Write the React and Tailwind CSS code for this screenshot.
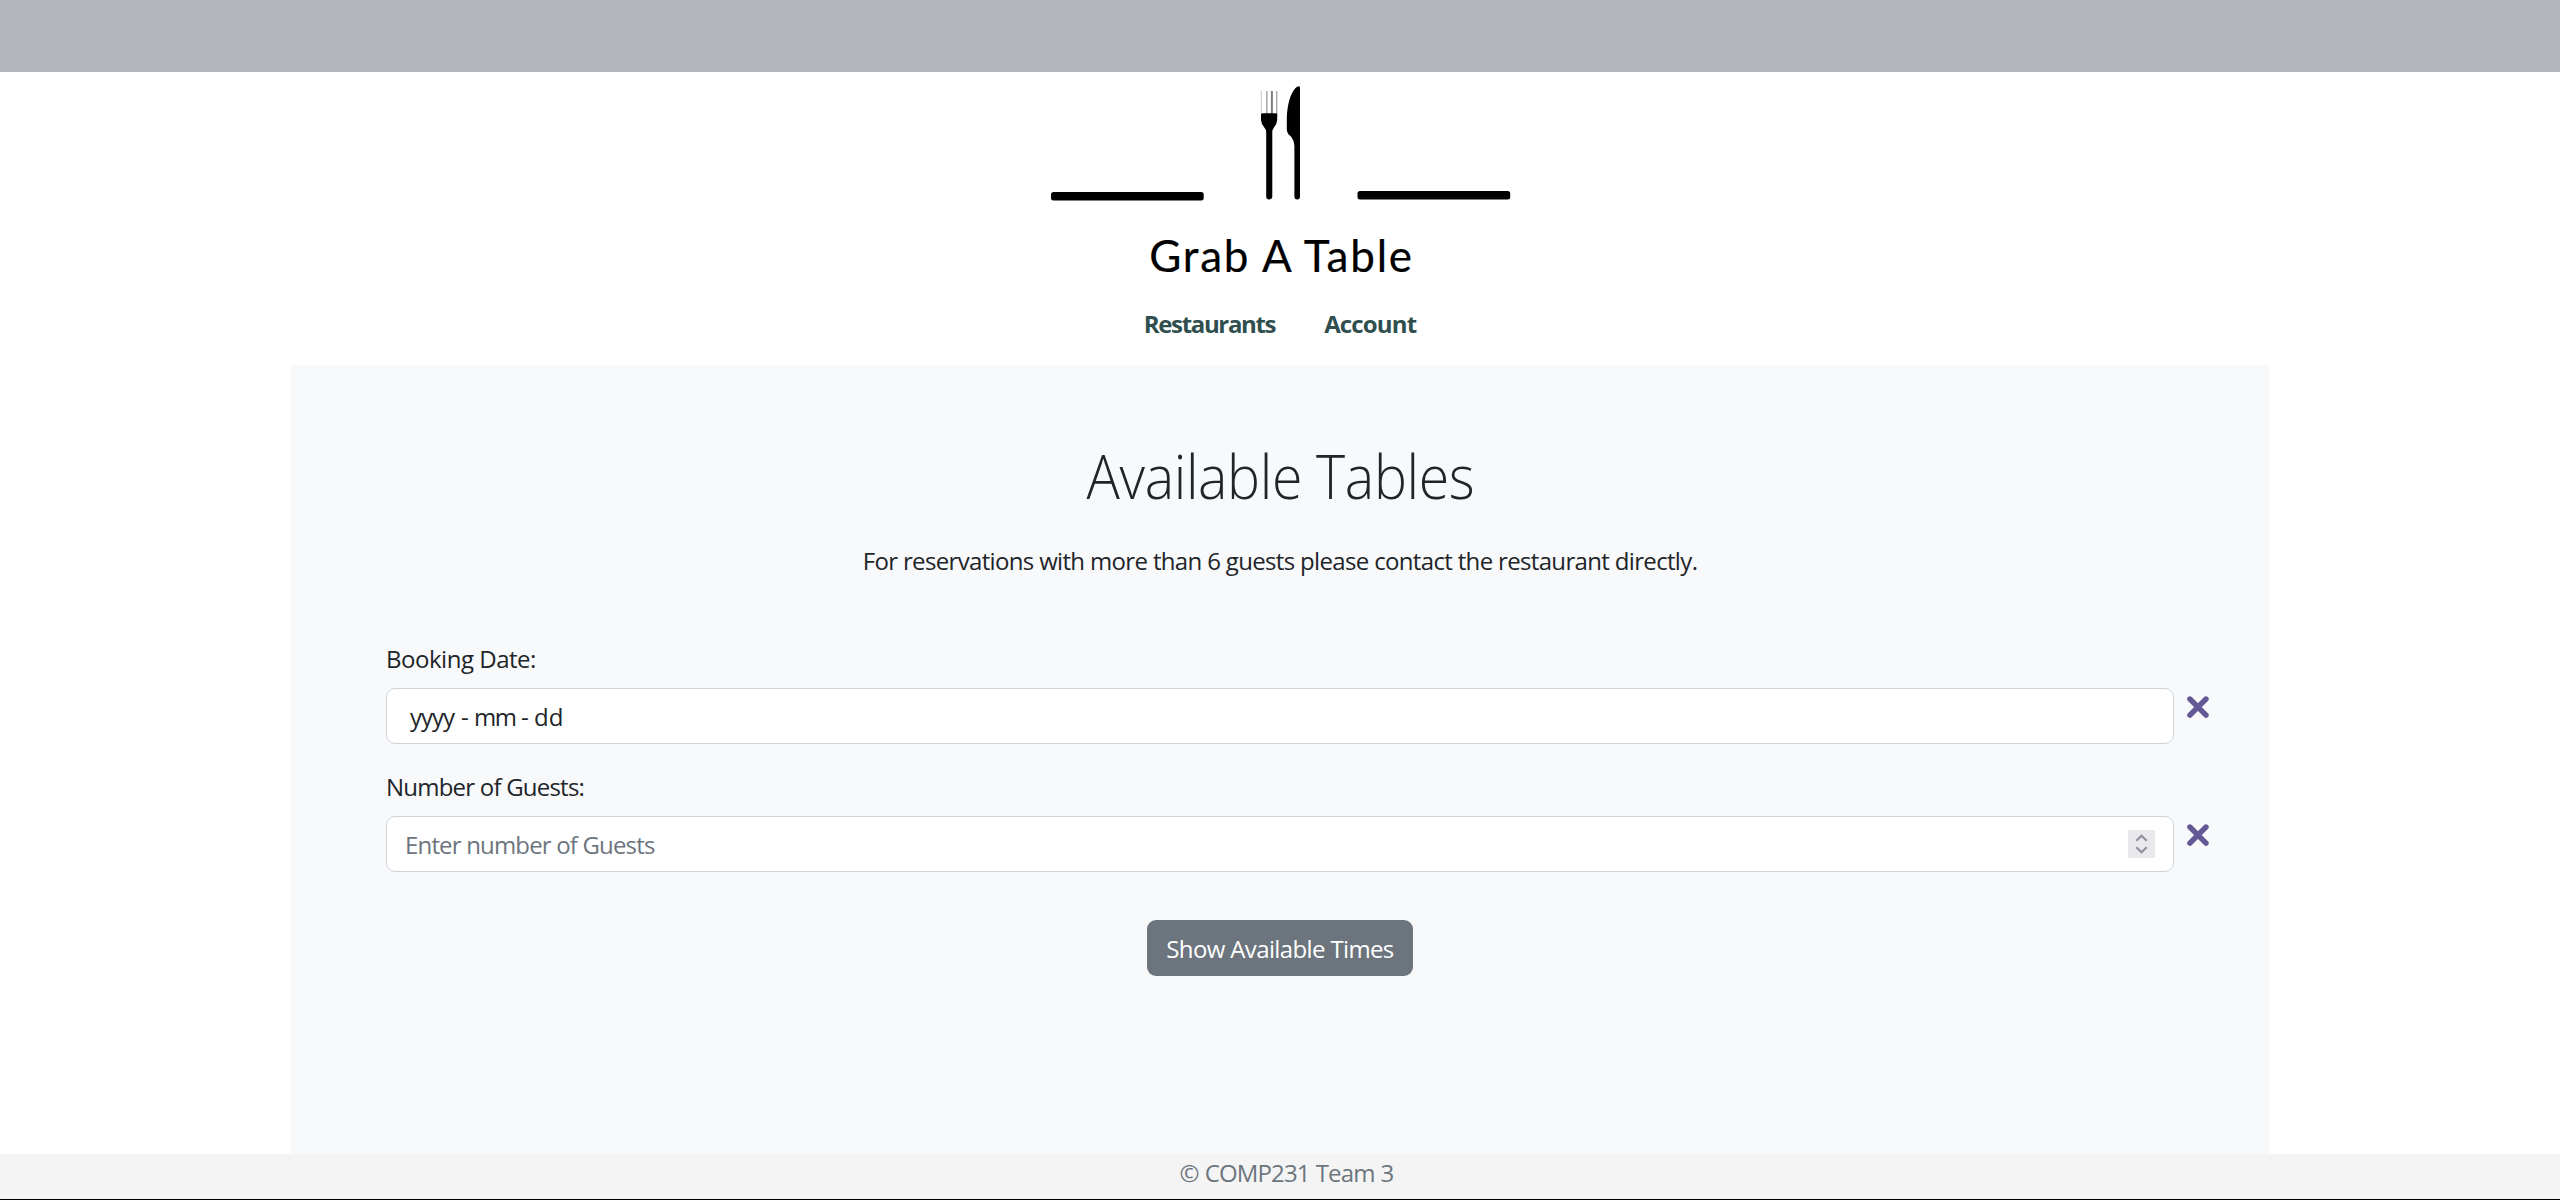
function Logo() {
  return (
    <div className="flex flex-col items-center">
      <svg className="h-[156px] w-[480px]" viewBox="1040 72 480 156" fill="black" aria-hidden="true">
        <rect x="1051" y="192" width="152.7" height="8.6" rx="2.5" />
        <rect x="1357.5" y="191" width="152.7" height="8.6" rx="2.5" />
        <g>
          <rect x="1260.8" y="91" width="0.9" height="24" opacity="0.25" />
          <rect x="1266.2" y="91" width="1.3" height="24" opacity="0.4" />
          <rect x="1270.9" y="91" width="2" height="24" opacity="0.5" />
          <rect x="1276" y="91" width="1.4" height="24" opacity="0.35" />
        </g>
        <path d="M1261 114.5Q1261 113.3 1263 113.3H1275.5Q1277.2 113.3 1277.2 114.5V120Q1277 124 1274 127.5Q1272.3 129.5 1272.3 132V196.5Q1272.3 199.4 1269.3 199.4Q1266.2 199.4 1266.2 196.5V132Q1266.2 129.5 1264.3 127.5Q1261.2 124 1261 120Z" />
        <path d="M1300 88V196.5Q1300 199.4 1297.2 199.4Q1294.4 199.4 1294.4 196.5V146Q1294 140 1290.5 136Q1286.8 133.5 1286.8 129V118C1287.3 105 1290 94 1295.5 88Q1297.5 86 1299 86.2Q1300 86.5 1300 88Z" />
      </svg>
      <div className="h-[78px] whitespace-nowrap pt-px pl-[3px] font-[Lato,sans-serif] text-[44px] leading-[53px] tracking-[1.8px] text-black [-webkit-text-stroke:0.2px_black]">
        Grab A Table
      </div>
    </div>
  );
}

function ClearButton() {
  return (
    <button type="button" aria-label="Clear" className="mt-[8px] ml-[13px] size-[23px] shrink-0">
      <svg viewBox="0 0 23 23" className="size-[23px]" fill="none" stroke="#635994" strokeWidth="5.4" strokeLinecap="round">
        <path d="M2.9 3L19 19.2M19 3L2.9 19.2" />
      </svg>
    </button>
  );
}

function Field({ label, labelClass, children }) {
  return (
    <div className="h-32">
      <div className={`h-[47px] whitespace-nowrap leading-9 ${labelClass}`}>{label}</div>
      <div className="flex">
        <div className="flex h-14 w-[1788px] items-center rounded-[9px] border border-[#ced4da] bg-white">{children}</div>
        <ClearButton />
      </div>
    </div>
  );
}

export default function App() {
  return (
    <div className="flex h-[1200px] flex-col overflow-hidden bg-white font-['Open_Sans','Noto_Sans',sans-serif] text-2xl text-[#212529]">
      <div className="h-[72px] shrink-0 bg-[#b4b7bc]" />
      <header className="h-[293px] shrink-0">
        <Logo />
        <nav className="flex justify-center gap-[49px] font-bold leading-9 text-[#2f4f4f]">
          <a className="tracking-[-1.34px]">Restaurants</a>
          <a className="tracking-[-0.85px]">Account</a>
        </nav>
      </header>
      <main className="mx-auto h-[789px] w-[1980px] shrink-0 bg-[#f8f9fb] pt-[75px]">
        <h1 className="h-[103px] scale-x-[0.925] pl-px text-center text-[60px] font-light leading-[72px] tracking-[-0.4px]">Available Tables</h1>
        <p className="h-[98px] text-center leading-9 tracking-[-0.66px]">
          For reservations with more than 6 guests please contact the restaurant directly.
        </p>
        <form className="pl-24">
          <Field label="Booking Date:" labelClass="tracking-[-0.48px]">
            <div className="flex pt-0.5 pl-[23px]">
              <span className="w-[51px] tracking-[-1.03px]">yyyy</span>
              <span className="w-[13px]">-</span>
              <span className="w-[47px] tracking-[-1.5px]">mm</span>
              <span className="w-[13px]">-</span>
              <span>dd</span>
            </div>
          </Field>
          <Field label="Number of Guests:" labelClass="tracking-[-0.78px]">
            <span className="grow pt-0.5 pl-[18px] tracking-[-0.83px] text-[#6c757d]">Enter number of Guests</span>
            <span className="mr-[18px] flex h-7 w-[27px] items-center justify-center bg-[#e9e9ed]">
              <svg viewBox="0 0 27 28" className="h-7 w-[27px]" fill="none" stroke="#8f8f9d" strokeWidth="2.2">
                <path d="M8.3 10.8L13.5 5.8L18.7 10.8M8.3 17.2L13.5 22.2L18.7 17.2" />
              </svg>
            </span>
          </Field>
        </form>
        <div className="flex justify-center pt-[23px]">
          <button type="button" className="h-14 w-[266px] whitespace-nowrap rounded-[9px] bg-[#6c757d] pt-0.5 tracking-[-0.63px] text-white">
            Show Available Times
          </button>
        </div>
      </main>
      <footer className="h-[46px] shrink-0 border-b border-black bg-[#f4f4f4] pt-px pl-[13px] text-center leading-9 tracking-[-0.85px] [word-spacing:0.6px] text-[#6c757d]">
        © COMP231 Team 3
      </footer>
    </div>
  );
}
